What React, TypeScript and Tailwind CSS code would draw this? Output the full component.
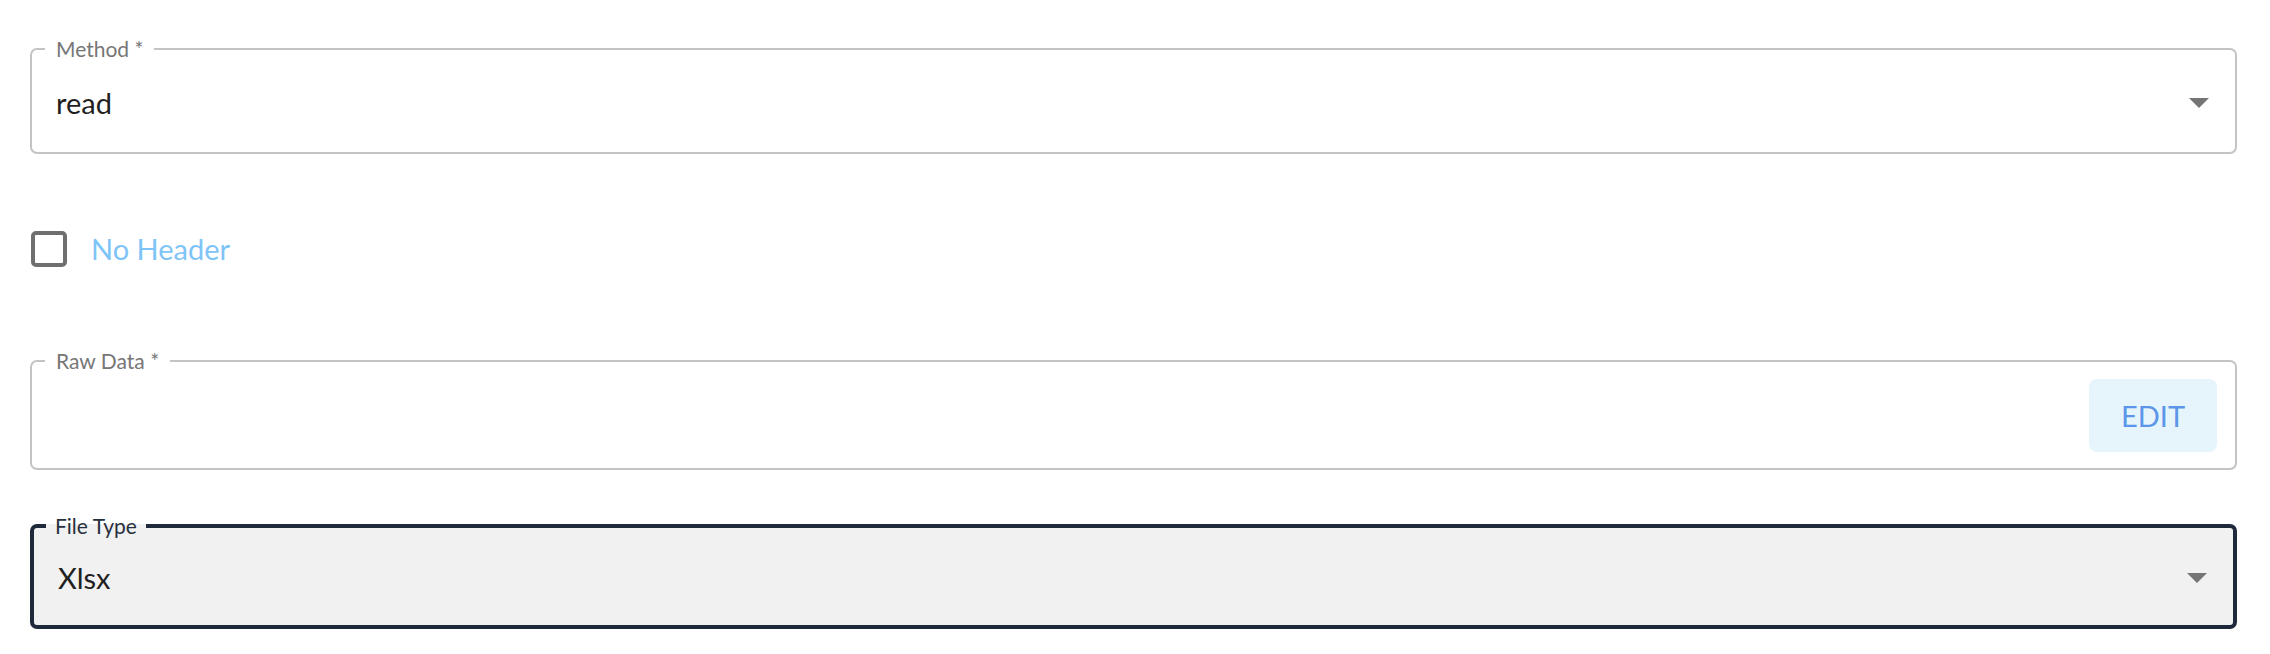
import React from 'react';

// --- Small pieces ---

const DropArrow: React.FC = () => (
  <svg width="20" height="10" viewBox="0 0 20 10" className="shrink-0">
    <polygon points="0,0 20,0 10,10" fill="#757575" />
  </svg>
);

const OutlinedField: React.FC<{
  label: string;
  value?: string;
  focused?: boolean;
  children?: React.ReactNode;
}> = ({ label, value, focused, children }) => {
  const box = focused
    ? 'border-4 border-[#1e293b] bg-[#f1f1f1]'
    : 'border-2 border-[#c4c4c4] bg-white';
  const legend = focused ? 'ml-[12px] px-[9px] text-[#27303e]' : 'ml-[13px] px-[11px] text-[#767676]';

  return (
    <fieldset className={`${box} rounded-[7px]`}>
      <legend className={`${legend} text-[21px] leading-[24px]`}>{label}</legend>
      {children ?? (
        <div className={`flex items-center justify-between pl-[24px] pr-[26px] pb-[8px] ${focused ? 'h-[87px] pl-[22px] pr-[24px]' : 'h-[91px]'}`}>
          <span className="text-[29px] text-[#1f1f1f]">{value}</span>
          <DropArrow />
        </div>
      )}
    </fieldset>
  );
};

// --- Page ---

const App: React.FC = () => {
  return (
    <div
      className="min-h-screen bg-white pt-[37px] pl-[30px] pr-[33px]"
      style={{ fontFamily: 'Lato, "Noto Sans", sans-serif' }}
    >
      <OutlinedField label="Method *" value="read" />

      {/* Checkbox row */}
      <div className="mt-[77px] flex items-center h-[36px]">
        <div className="ml-[1px] w-[36px] h-[36px] rounded-[5px] border-4 border-[#6f6f6f]" />
        <span className="ml-[24px] text-[29px] text-[#7ec4f7]">No Header</span>
      </div>

      <div className="mt-[82px]">
        <OutlinedField label="Raw Data *">
          <div className="h-[95px] flex justify-end items-start pt-[6px] pr-[18px]">
            <button className="w-[128px] h-[73px] rounded-[8px] bg-[#e6f4fc] text-[#5b96e8] text-[29px] flex items-center justify-center">
              EDIT
            </button>
          </div>
        </OutlinedField>
      </div>

      <div className="mt-[44px]">
        <OutlinedField label="File Type" value="Xlsx" focused />
      </div>
    </div>
  );
};

export default App;
